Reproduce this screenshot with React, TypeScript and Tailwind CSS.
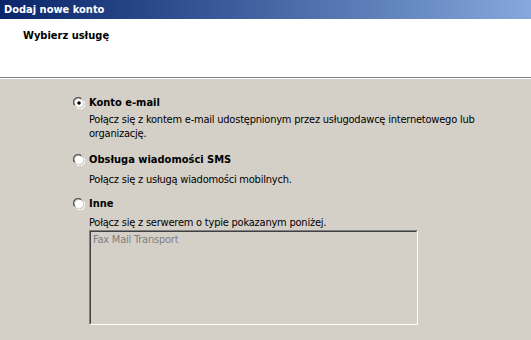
const FONT = "font-['DejaVu_Sans_Condensed','DejaVu_Sans',sans-serif]"

function Radio({ checked }: { checked?: boolean }) {
  return (
    <svg width="12" height="12" viewBox="0 0 12 12" className="shrink-0">
      <path d="M1 8 A5 5 0 0 1 8 1" fill="none" stroke="#808080" strokeWidth="1" />
      <path d="M2 8.5 A4.2 4.2 0 0 1 8.5 2" fill="none" stroke="#404040" strokeWidth="1" />
      <circle cx="6" cy="6" r="4" fill="#ffffff" />
      <path d="M11 4 A5 5 0 0 1 4 11" fill="none" stroke="#ffffff" strokeWidth="1" />
      {checked && <circle cx="6" cy="6" r="1.8" fill="#000000" />}
    </svg>
  )
}

type Option = { label: string; desc: string[]; checked?: boolean; top: string; descTop: string }

const OPTIONS: Option[] = [
  {
    label: 'Konto e-mail',
    desc: ['Połącz się z kontem e-mail udostępnionym przez usługodawcę internetowego lub', 'organizację.'],
    checked: true,
    top: 'mt-0',
    descTop: 'pt-[3px]',
  },
  { label: 'Obsługa wiadomości SMS', desc: ['Połącz się z usługą wiadomości mobilnych.'], top: 'mt-[12px]', descTop: 'pt-[6px]' },
  { label: 'Inne', desc: ['Połącz się z serwerem o typie pokazanym poniżej.'], top: 'mt-[10px]', descTop: 'pt-[5px]' },
]

export default function App() {
  return (
    <div className={`w-[531px] h-[340px] overflow-hidden bg-[#d4d0c8] flex flex-col text-[11px] ${FONT}`}>
      <div className="h-[19px] shrink-0 bg-gradient-to-r from-[#0a246a] to-[#86a8dc] flex items-center px-[4px]">
        <span className="text-white font-bold text-[11px] leading-none">Dodaj nowe konto</span>
      </div>
      <div className="h-[58px] shrink-0 bg-white pl-[23px] pt-[9px]">
        <span className="font-bold text-black text-[11px]">Wybierz usługę</span>
      </div>
      <div className="h-px bg-[#808080]" />
      <div className="h-px bg-white" />

      <div className="pl-[73px] pt-[17px] flex flex-col">
        {OPTIONS.map((o, i) => (
          <div key={o.label} className={`flex flex-col ${o.top}`}>
            <div className="flex items-center gap-[4px] h-[14px]">
              <Radio checked={o.checked} />
              <span className="font-bold text-black">{o.label}</span>
            </div>
            <div className={`pl-[16px] ${o.descTop} leading-[14px] text-black tracking-[-0.22px]`}>
              {o.desc.map(d => (
                <div key={d}>{d}</div>
              ))}
            </div>
            {i === OPTIONS.length - 1 && (
              <div className="ml-[16px] w-[329px] h-[95px] border border-t-[#808080] border-l-[#808080] border-b-white border-r-white">
                <div className="h-full border border-t-[#404040] border-l-[#404040] border-b-[#d4d0c8] border-r-[#d4d0c8] px-[2px] text-[#808080] tracking-[-0.22px]">
                  Fax Mail Transport
                </div>
              </div>
            )}
          </div>
        ))}
      </div>
    </div>
  )
}
